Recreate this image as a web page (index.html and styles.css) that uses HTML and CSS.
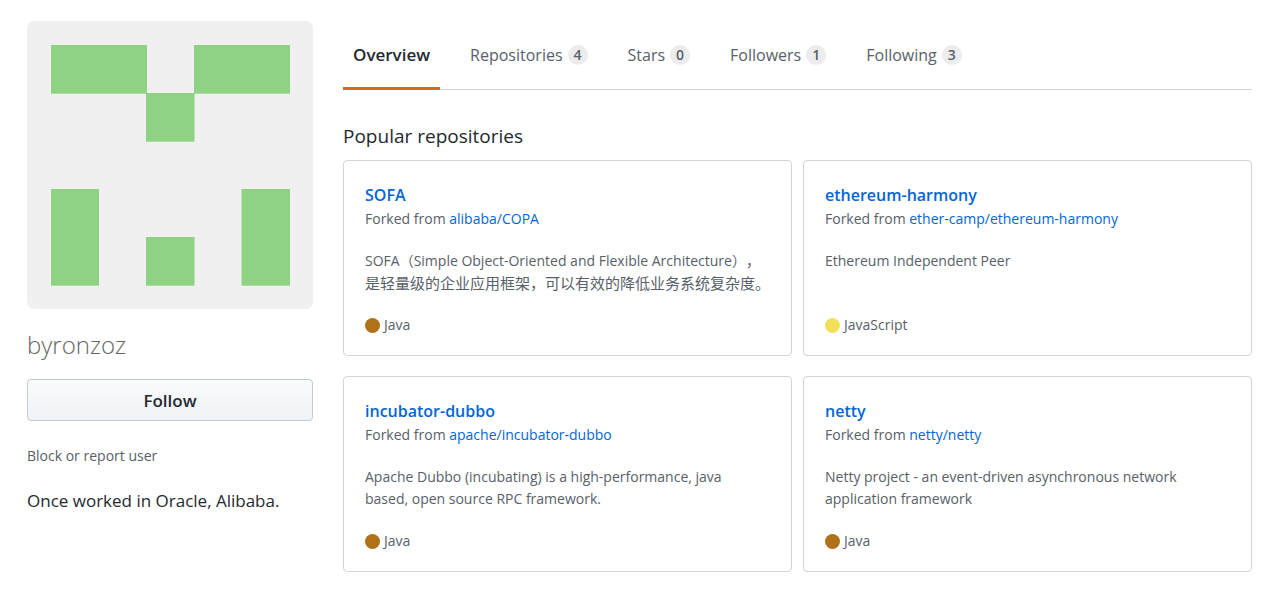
FILE: index.html
```html
<!DOCTYPE html>
<html lang="en">
<head>
<meta charset="utf-8">
<meta name="viewport" content="width=device-width, initial-scale=1">
<title>byronzoz</title>
<link rel="stylesheet" href="styles.css">
</head>
<body>
<div class="page">
  <aside class="profile">
    <svg class="avatar" viewBox="0 0 286 288" role="img" aria-label="byronzoz avatar">
      <rect width="286" height="288" fill="#f0f0f0"/>
      <g fill="#8fd284">
        <rect x="24" y="24" width="96" height="48.7"/>
        <rect x="167" y="24" width="96" height="48.7"/>
        <rect x="119" y="72" width="48.5" height="48.7"/>
        <rect x="24" y="168" width="48" height="96.7"/>
        <rect x="214.5" y="168" width="48.5" height="96.7"/>
        <rect x="119" y="216" width="48.5" height="48.7"/>
      </g>
    </svg>
    <h1 class="username">byronzoz</h1>
    <button class="follow" type="button">Follow</button>
    <a class="report" href="#report">Block or report user</a>
    <p class="bio">Once worked in Oracle, Alibaba.</p>
  </aside>

  <main class="content">
    <nav class="tabs" aria-label="User profile">
      <a class="tab tab-selected" href="#overview" aria-current="page">Overview</a>
      <a class="tab" href="#repositories">Repositories <span class="counter">4</span></a>
      <a class="tab" href="#stars">Stars <span class="counter">0</span></a>
      <a class="tab" href="#followers">Followers <span class="counter">1</span></a>
      <a class="tab" href="#following">Following <span class="counter">3</span></a>
    </nav>

    <h2 class="section-title">Popular repositories</h2>
    <ul class="repos">
      <li class="repo">
        <a class="repo-name" href="#sofa">SOFA</a>
        <p class="fork">Forked from <a href="#copa">alibaba/COPA</a></p>
        <p class="description">SOFA（Simple Object-Oriented and Flexible Architecture），<span class="chinese" lang="zh-CN">是轻量级的企业应用框架，可以有效的降低业务系统复杂度。</span></p>
        <p class="language"><span class="dot dot-java"></span>Java</p>
      </li>
      <li class="repo">
        <a class="repo-name" href="#ethereum-harmony">ethereum-harmony</a>
        <p class="fork">Forked from <a href="#ether-camp">ether-camp/ethereum-harmony</a></p>
        <p class="description">Ethereum Independent Peer</p>
        <p class="language"><span class="dot dot-javascript"></span>JavaScript</p>
      </li>
      <li class="repo">
        <a class="repo-name" href="#incubator-dubbo">incubator-dubbo</a>
        <p class="fork">Forked from <a href="#apache">apache/incubator-dubbo</a></p>
        <p class="description">Apache Dubbo (incubating) is a high-performance, java based, open source RPC framework.</p>
        <p class="language"><span class="dot dot-java"></span>Java</p>
      </li>
      <li class="repo">
        <a class="repo-name" href="#netty">netty</a>
        <p class="fork">Forked from <a href="#netty-netty">netty/netty</a></p>
        <p class="description">Netty project - an event-driven asynchronous network application framework</p>
        <p class="language"><span class="dot dot-java"></span>Java</p>
      </li>
    </ul>
  </main>
</div>
</body>
</html>
```

FILE: styles.css
```css
* {
  box-sizing: border-box;
}

body {
  margin: 0;
  background: #fff;
  color: #24292e;
  font-family: "Open Sans", "Noto Sans CJK SC", sans-serif;
  font-size: 14px;
  line-height: 22px;
}

h1, h2, p, ul {
  margin: 0;
  padding: 0;
}

a {
  color: #0366d6;
  text-decoration: none;
}

.page {
  display: grid;
  grid-template-columns: minmax(0, 286fr) minmax(0, 909fr);
  gap: 30px;
  padding: 21px 27px 19px;
}

.profile {
  display: flex;
  flex-direction: column;
}

.avatar {
  display: block;
  width: 100%;
  border-radius: 7px;
}

.username {
  margin: 20px 0 18px;
  color: #666;
  font-size: 24px;
  font-weight: 300;
  line-height: 32px;
}

.follow {
  height: 42px;
  padding: 2px 10px 0;
  border: 1px solid #c6c9cc;
  border-radius: 4px;
  background: linear-gradient(#fafbfc, #eff3f6);
  color: #24292e;
  font: inherit;
  font-size: 17px;
  font-weight: 600;
}

.report {
  margin: 24px 0 20px;
  color: #586069;
}

.bio {
  font-size: 17px;
  line-height: 27px;
}

.tabs {
  display: flex;
  gap: 20px;
  height: 69px;
  border-bottom: 1px solid #d1d5da;
}

.tab {
  display: flex;
  align-items: center;
  gap: 5px;
  height: 69px;
  padding: 2px 10px 0;
  border-bottom: 3px solid transparent;
  color: #586069;
  font-size: 16px;
}

.tab-selected {
  border-color: #e36209;
  color: #24292e;
  font-size: 17px;
  font-weight: 600;
}

.counter {
  min-width: 20px;
  padding: 0 6px;
  border-radius: 10px;
  background: #ececed;
  font-size: 14px;
  font-weight: 600;
  line-height: 20px;
  text-align: center;
}

.section-title {
  margin: 33px 0 11px;
  font-size: 19px;
  font-weight: 400;
  line-height: 26px;
}

.repos {
  display: grid;
  grid-template-columns: repeat(2, minmax(0, 1fr));
  gap: 20px 11px;
  list-style: none;
}

.repo {
  padding: 21px 20px 19px 21px;
  border: 1px solid #d1d5da;
  border-radius: 4px;
}

.repo-name {
  display: block;
  font-size: 16px;
  font-weight: 600;
  line-height: 26px;
}

.fork,
.language {
  color: #586069;
}

.description {
  min-height: 44px;
  margin: 20px 0;
  padding-right: 8px;
  color: #586069;
  text-spacing-trim: space-all;
}

.chinese {
  display: block;
  font-family: "Noto Sans CJK SC", sans-serif;
  font-size: 15px;
  white-space: nowrap;
}

.language {
  display: flex;
  align-items: center;
  gap: 4px;
}

.dot {
  width: 15px;
  height: 15px;
  border-radius: 50%;
}

.dot-java {
  background: #b07219;
}

.dot-javascript {
  background: #f1e05a;
}
```
